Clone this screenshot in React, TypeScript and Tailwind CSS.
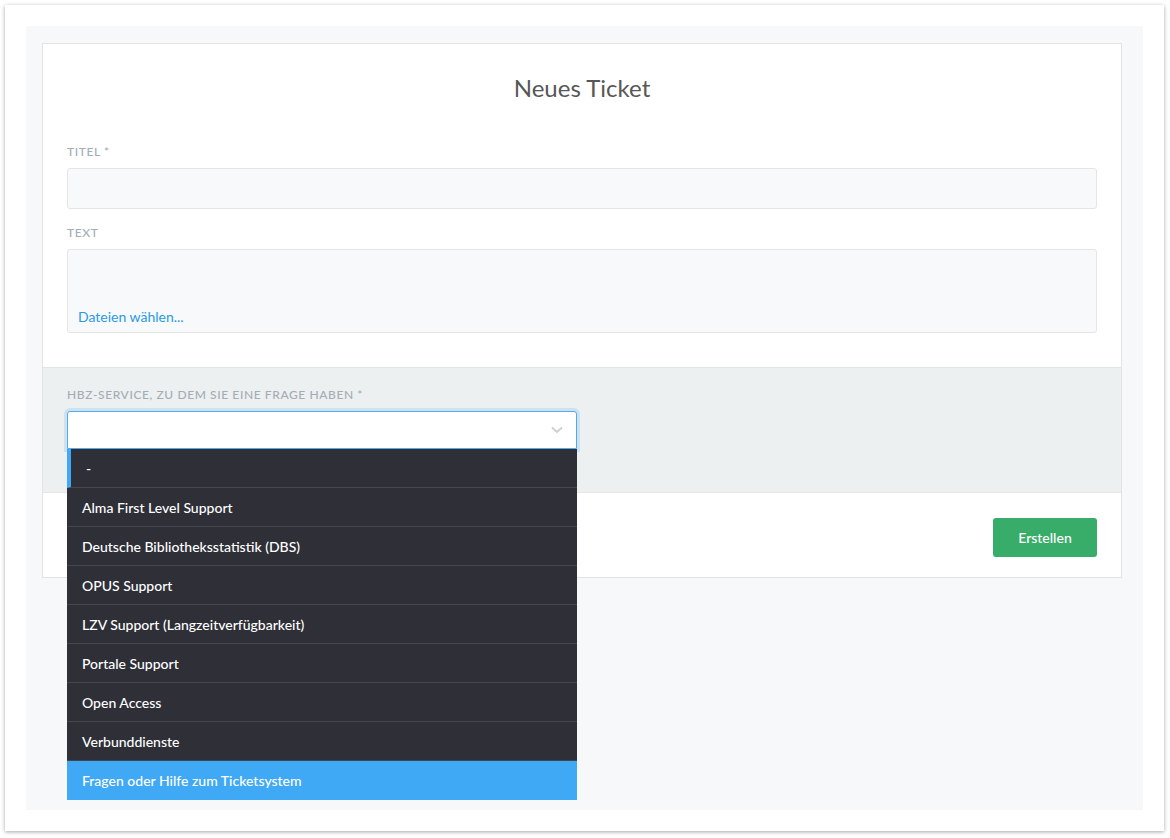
const services = [
  "Alma First Level Support",
  "Deutsche Bibliotheksstatistik (DBS)",
  "OPUS Support",
  "LZV Support (Langzeitverfügbarkeit)",
  "Portale Support",
  "Open Access",
  "Verbunddienste",
];

function Label({ children }: { children: React.ReactNode }) {
  return (
    <div className="h-4 text-[12px] leading-4 uppercase tracking-[0.05em] font-medium text-[#a4adb5] mb-2">
      {children}
    </div>
  );
}

export default function App() {
  return (
    <div className="w-[1170px] h-[838px] bg-white pt-[5px] pl-[5px] font-['Lato',sans-serif]">
      <div className="w-[1159px] h-[826px] bg-white shadow-[0_1px_4px_rgba(0,0,0,0.35)] p-[21px]">
        <div className="w-full h-full bg-[#f7f8fa] pt-[17px] pl-[16px]">
          <div className="w-[1080px] h-[535px] bg-white border border-[#e3e3e3] flex flex-col">
            {/* form body */}
            <div className="px-6 pt-7">
              <h1 className="text-center text-[24px] leading-8 text-[#575757] mb-10">
                Neues Ticket
              </h1>
              <Label>Titel *</Label>
              <div className="h-[41px] bg-[#f8f9fa] border border-[#e5e5e5] rounded-[3px] mb-4" />
              <Label>Text</Label>
              <div className="h-[84px] bg-[#f8f9fa] border border-[#e5e5e5] rounded-[3px] flex items-end px-[10px] pb-[5px]">
                <span className="text-[14px] leading-5 text-[#2b9ae4]">
                  Dateien wählen...
                </span>
              </div>
            </div>

            {/* service select */}
            <div className="mt-[34px] bg-[#edf0f1] border-t border-[#e2e5e7] px-6 pt-[19px] h-[125px]">
              <Label>hbz-Service, zu dem Sie eine Frage haben *</Label>
              <div className="relative w-[510px]">
                <div className="h-[38px] bg-white border border-[#55a9ef] rounded-t-[3px] shadow-[0_0_0_3px_rgba(80,169,241,0.2)] flex items-center justify-end pr-[13px]">
                  <svg width="12" height="8" viewBox="0 0 12 8" fill="none">
                    <polyline
                      points="1,1.5 6,6 11,1.5"
                      stroke="#cfcfcf"
                      strokeWidth="1.8"
                    />
                  </svg>
                </div>
                <ul className="absolute left-0 top-[38px] w-[510px] z-10 bg-[#2e2f37] text-white text-[14px] font-medium">
                  <li className="h-[39px] flex items-center border-b border-[#46474e] border-l-4 border-l-[#3fa9f5] pl-[15px]">
                    -
                  </li>
                  {services.map((s) => (
                    <li
                      key={s}
                      className="h-[39px] flex items-center border-b border-[#46474e] pl-[15px]"
                    >
                      {s}
                    </li>
                  ))}
                  <li className="h-[39px] flex items-center bg-[#3fa9f5] pl-[15px]">
                    Fragen oder Hilfe zum Ticketsystem
                  </li>
                </ul>
              </div>
            </div>

            {/* footer */}
            <div className="border-t border-[#e6e6e6] flex justify-end px-6 pt-[25px]">
              <button className="w-[104px] h-[39px] bg-[#38ad69] rounded-[3px] text-white text-[14px] font-medium">
                Erstellen
              </button>
            </div>
          </div>
        </div>
      </div>
    </div>
  );
}
